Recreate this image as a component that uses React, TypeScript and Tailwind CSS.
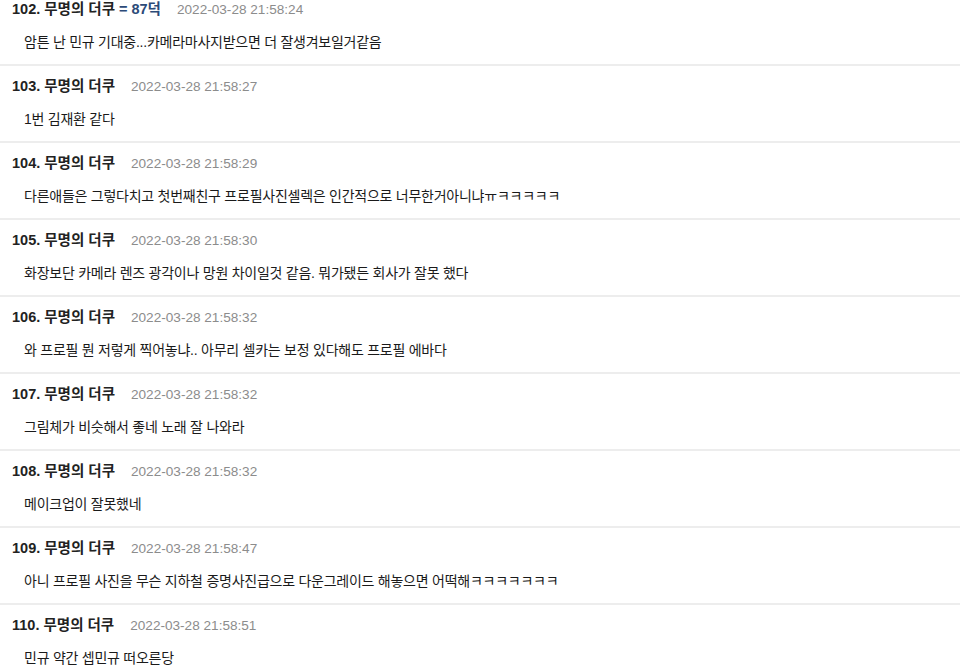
const comments = [
  { no: 102, date: "2022-03-28 21:58:24", body: "암튼 난 민규 기대중...카메라마사지받으면 더 잘생겨보일거같음", ref: "= 87덕" },
  { no: 103, date: "2022-03-28 21:58:27", body: "1번 김재환 같다" },
  { no: 104, date: "2022-03-28 21:58:29", body: "다른애들은 그렇다치고 첫번째친구 프로필사진셀렉은 인간적으로 너무한거아니냐ㅠㅋㅋㅋㅋㅋ" },
  { no: 105, date: "2022-03-28 21:58:30", body: "화장보단 카메라 렌즈 광각이나 망원 차이일것 같음. 뭐가됐든 회사가 잘못 했다" },
  { no: 106, date: "2022-03-28 21:58:32", body: "와 프로필 뭔 저렇게 찍어놓냐.. 아무리 셀카는 보정 있다해도 프로필 에바다" },
  { no: 107, date: "2022-03-28 21:58:32", body: "그림체가 비슷해서 좋네 노래 잘 나와라" },
  { no: 108, date: "2022-03-28 21:58:32", body: "메이크업이 잘못했네" },
  { no: 109, date: "2022-03-28 21:58:47", body: "아니 프로필 사진을 무슨 지하철 증명사진급으로 다운그레이드 해놓으면 어떡해ㅋㅋㅋㅋㅋㅋㅋ" },
  { no: 110, date: "2022-03-28 21:58:51", body: "민규 약간 셉민규 떠오른당" },
];

function CommentRow({ no, date, body, ref: replyTo }: { no: number; date: string; body: string; ref?: string }) {
  return (
    <li className="border-b-2 border-[#ededed]">
      <div className="pt-[11px] pb-[12px]">
        {/* header */}
        <div className="flex items-center h-5 pl-3">
          <span className="text-[14.5px] font-bold text-[#222]">
            {no}. 무명의 더쿠
            {replyTo && <span className="ml-1 text-[#2c4a78]">{replyTo}</span>}
          </span>
          <span className="ml-4 text-[13.6px] text-[#8c8c8c]">{date}</span>
        </div>
        {/* body */}
        <p className="mt-3 h-5 leading-5 pl-6 text-[14px] tracking-[-0.25px] text-[#1a1a1a]">{body}</p>
      </div>
    </li>
  );
}

export default function App() {
  return (
    <div className="w-[960px] h-[670px] overflow-hidden bg-white font-['Liberation_Sans','Noto_Sans_CJK_KR',sans-serif]">
      <ul className="-mt-[11px]">
        {comments.map((c) => (
          <CommentRow key={c.no} {...c} />
        ))}
      </ul>
    </div>
  );
}
